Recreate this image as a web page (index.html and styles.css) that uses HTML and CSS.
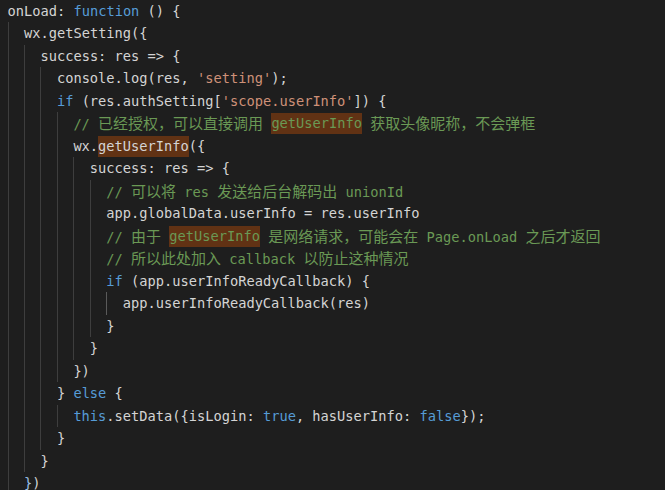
FILE: index.html
```html
<!DOCTYPE html>
<html>
<head>
    <title>onLoad</title>
    <link rel="stylesheet" href="styles.css">
</head>
<body>
    <div class="editor">
        <div class="ln">onLoad: <span class="kw">function</span> () {</div>
        <div class="ln"><span class="ig"></span>wx.getSetting({</div>
        <div class="ln"><span class="ig"></span><span class="ig"></span>success: res =&gt; {</div>
        <div class="ln"><span class="ig"></span><span class="ig"></span><span class="ig"></span>console.log(res, <span class="str">'setting'</span>);</div>
        <div class="ln"><span class="ig"></span><span class="ig"></span><span class="ig"></span><span class="kw">if</span> (res.authSetting[<span class="str">'scope.userInfo'</span>]) {</div>
        <div class="ln"><span class="ig"></span><span class="ig"></span><span class="ig"></span><span class="ig"></span><span class="cm">// <span class="zh">已经授权，可以直接调用</span> <span class="hl">getUserInfo</span> <span class="zh">获取头像昵称，不会弹框</span></span></div>
        <div class="ln"><span class="ig"></span><span class="ig"></span><span class="ig"></span><span class="ig"></span>wx.<span class="hl">getUserInfo</span>({</div>
        <div class="ln"><span class="ig"></span><span class="ig"></span><span class="ig"></span><span class="ig"></span><span class="ig"></span>success: res =&gt; {</div>
        <div class="ln"><span class="ig"></span><span class="ig"></span><span class="ig"></span><span class="ig"></span><span class="ig"></span><span class="ig"></span><span class="cm">// <span class="zh">可以将</span> res <span class="zh">发送给后台解码出</span> unionId</span></div>
        <div class="ln"><span class="ig"></span><span class="ig"></span><span class="ig"></span><span class="ig"></span><span class="ig"></span><span class="ig"></span>app.globalData.userInfo = res.userInfo</div>
        <div class="ln"><span class="ig"></span><span class="ig"></span><span class="ig"></span><span class="ig"></span><span class="ig"></span><span class="ig"></span><span class="cm">// <span class="zh">由于</span> <span class="hl">getUserInfo</span> <span class="zh">是网络请求，可能会在</span> Page.onLoad <span class="zh">之后才返回</span></span></div>
        <div class="ln"><span class="ig"></span><span class="ig"></span><span class="ig"></span><span class="ig"></span><span class="ig"></span><span class="ig"></span><span class="cm">// <span class="zh">所以此处加入</span> callback <span class="zh">以防止这种情况</span></span></div>
        <div class="ln"><span class="ig"></span><span class="ig"></span><span class="ig"></span><span class="ig"></span><span class="ig"></span><span class="ig"></span><span class="kw">if</span> (app.userInfoReadyCallback) {</div>
        <div class="ln"><span class="ig"></span><span class="ig"></span><span class="ig"></span><span class="ig"></span><span class="ig"></span><span class="ig"></span><span class="ig active"></span>app.userInfoReadyCallback(res)</div>
        <div class="ln"><span class="ig"></span><span class="ig"></span><span class="ig"></span><span class="ig"></span><span class="ig"></span><span class="ig"></span>}</div>
        <div class="ln"><span class="ig"></span><span class="ig"></span><span class="ig"></span><span class="ig"></span><span class="ig"></span>}</div>
        <div class="ln"><span class="ig"></span><span class="ig"></span><span class="ig"></span><span class="ig"></span>})</div>
        <div class="ln"><span class="ig"></span><span class="ig"></span><span class="ig"></span>} <span class="kw">else</span> {</div>
        <div class="ln"><span class="ig"></span><span class="ig"></span><span class="ig"></span><span class="ig"></span><span class="kw">this</span>.setData({isLogin: <span class="kw">true</span>, hasUserInfo: <span class="kw">false</span>});</div>
        <div class="ln"><span class="ig"></span><span class="ig"></span><span class="ig"></span>}</div>
        <div class="ln"><span class="ig"></span><span class="ig"></span>}</div>
        <div class="ln"><span class="ig"></span><span class="match">}</span>)</div>
    </div>
</body>
</html>
```

FILE: styles.css
```css
/* editor look: dark theme, monospace */
html, body {
    margin: 0;
    background-color: #1e1e1e;
}
.editor {
    font-family: "DejaVu Sans Mono", "Noto Sans CJK SC", monospace;
    font-size: 13.7px;
    color: #d4d4d4;
    padding-left: 7.5px;
    margin-top: -0.5px;
    overflow: hidden;
    height: 490px;
}
.ln {
    height: 22.5px;
    line-height: 22.5px;
    white-space: pre;
}
.ig {
    display: inline-block;
    box-sizing: border-box;
    width: 2ch;
    height: 22.5px;
    vertical-align: top;
    border-left: 1px solid #3e3e3e;
}
.ig.active {
    border-left-color: #5a5a5a;
}
.kw {
    color: #569cd6;
}
.str {
    color: #ce9178;
}
.cm {
    color: #6a9955;
}
.zh {
    font-family: "Noto Sans CJK SC", sans-serif;
    font-size: 15px;
}
.hl {
    display: inline-block;
    height: 21px;
    margin-top: 1px;
    line-height: 21px;
    vertical-align: top;
    background-color: #613214;
}
.match {
    color: #9cc0e6;
}
```
